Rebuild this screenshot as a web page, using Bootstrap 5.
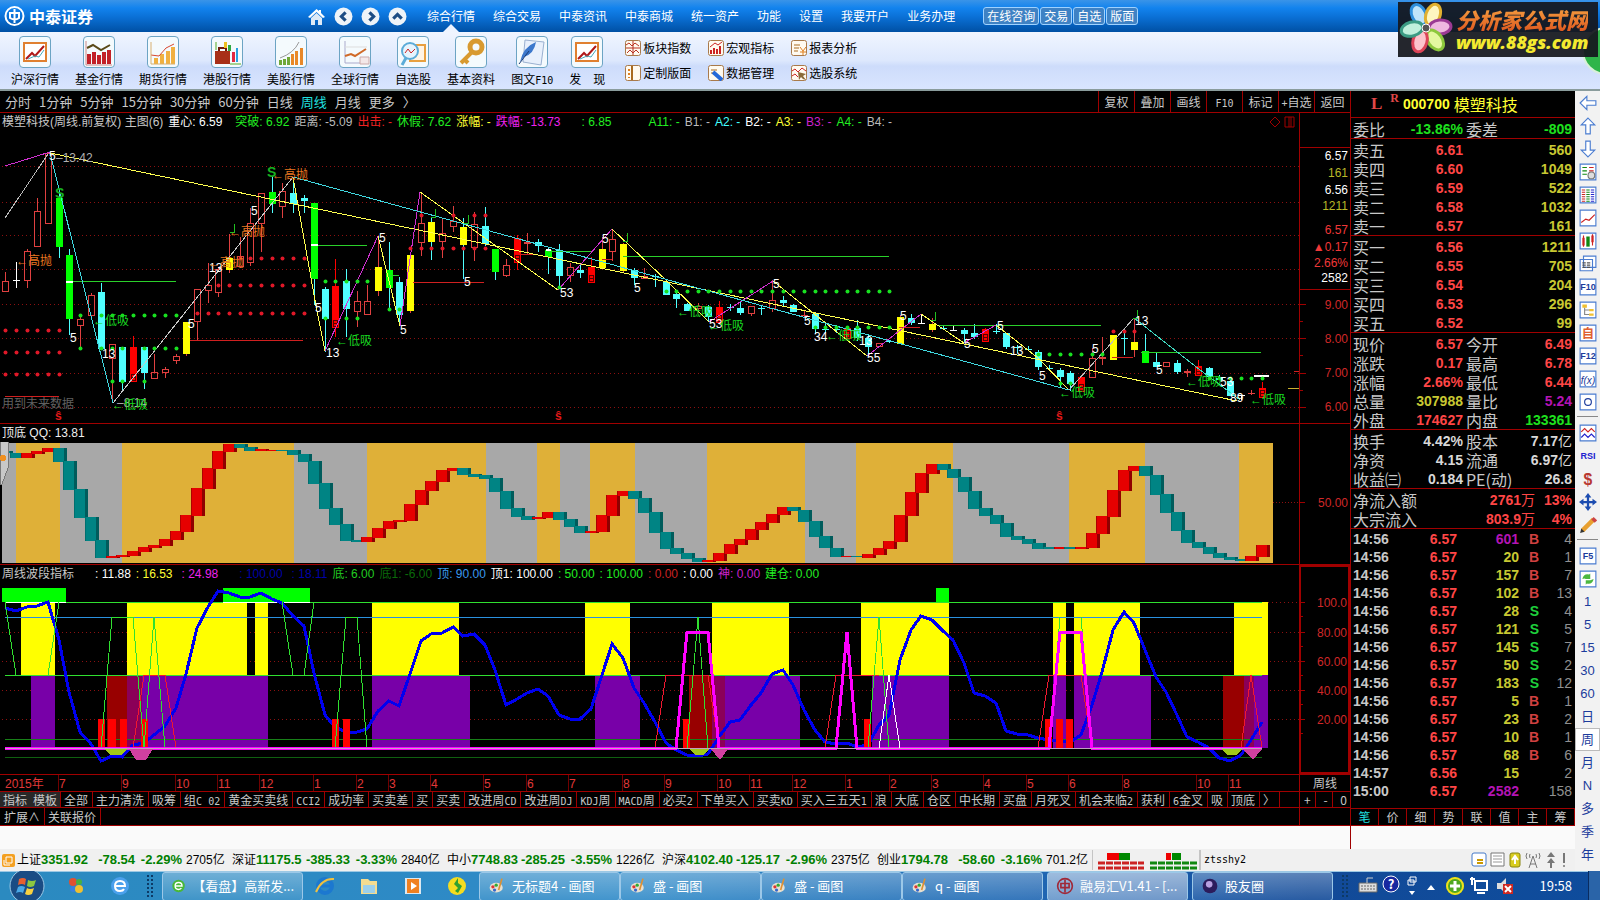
<!DOCTYPE html>
<html lang="zh-CN">
<head>
<meta charset="utf-8">
<meta name="viewport" content="width=device-width, initial-scale=1">
<title>中泰证券 融易汇</title>
<link href="https://cdn.jsdelivr.net/npm/bootstrap@5.3.0/dist/css/bootstrap.min.css" rel="stylesheet">
<style>
:root{--line:#a00000;--red:#ff3c3c;--soft:#e04848;--grey:#c8c8c8;--yel:#c8c832;--grn:#1ee01e;--mag:#b414b4;--cyan:#50ffff}
body{font-family:"Liberation Sans","Noto Sans CJK SC",sans-serif;font-size:12px;line-height:16px;background:#000;color:var(--grey);overflow-x:hidden}
button{font:inherit;color:inherit;background:none;border:0;padding:0;line-height:inherit}
a{color:inherit;text-decoration:none}
svg{display:block}
.cjk{font-family:"Noto Sans CJK SC",sans-serif}
.lat{font-family:"DejaVu Sans Mono",monospace;font-size:10px;line-height:1}
.topbar{height:32px;background:linear-gradient(#3a94e8,#1283ee 25%,#0a6fd4 55%,#0050a4);color:#fff}
.brandname{font:700 16px/20px "Noto Sans CJK SC",sans-serif}
.topnav{gap:18px}
.topnav a{position:relative}
.topnav a.current::after{content:"";position:absolute;left:16px;top:16px;border:8px solid transparent;border-top:0;border-bottom-color:#eef4ff}
.topbtns{gap:1px}
.topbtn{height:18px;padding:0 3px;border:1px solid #9fd2ff;border-radius:3px;background:#3f82c4}
.ribbon{height:59px;background:linear-gradient(#f0f5ff,#dde8fd 50%,#cddcfb 60%,#d9e5fe);border-bottom:2px solid #8a9c9c;color:#000}
.bigtool{padding:4px 8px 0}
.bigtool .pic{width:32px;height:32px;border:1px solid #6ca4c4;border-radius:4px;background:#f4fafd;margin-bottom:3px}
.minis{grid-template-columns:repeat(3,66px);column-gap:17px;row-gap:8px}
.minis button{gap:2px;height:17px;white-space:nowrap}
.sitelogo{position:absolute;right:2px;top:2px;width:200px;height:55px;background:#15181eee;z-index:3}
.sitelogo b{font:italic 900 22px/24px "Noto Sans CJK SC",sans-serif;background:linear-gradient(#f5a040,#e05a20);-webkit-background-clip:text;color:transparent}
.sitelogo i{font:italic 800 18px/22px "Open Sans",sans-serif;color:#f4ea30}
.ball{position:absolute;right:-30px;top:27px;width:48px;height:48px;border-radius:50%;background:#2fb54a;border:2px solid #d8f0d8;z-index:2}
.quote-shell{width:100%}
.periods{height:22px;border-bottom:1px solid var(--line)}
.periods .list{gap:8px;padding-left:5px;font-size:13px}
.periods .ops button{width:36px;border-left:1px solid var(--line);white-space:nowrap}
.pane{position:relative;border-bottom:1px solid var(--line)}
.axis{width:51px;border-left:1px solid var(--line)}
.legend-row{height:18px;gap:5px;padding-left:2px;white-space:nowrap}
.months{height:16px}
.tabs{height:17px;border-top:1px solid var(--line);border-bottom:1px solid var(--line)}
.tabs button{padding:0 4px;border-right:1px solid var(--line);margin-right:-1px;white-space:nowrap;line-height:15px}
.tabs .tool{padding:0 3px;background:#282828}
.tabs.links{border-top:0;height:18px}
.side{width:225px;border-left:1px solid var(--line)}
.side table{width:100%;border-collapse:separate;border-spacing:0;padding-top:1px;border-bottom:1px solid var(--line);font-weight:700;font-size:14px}
.side td,.side th{height:19px;padding:0;line-height:18px;text-align:right}
.side th{font:400 16px/18px "Noto Sans CJK SC",sans-serif;text-align:left;width:50px;white-space:nowrap}
.side td:last-child{padding-right:3px}
.side tr>:first-child{padding-left:2px}
.side td.w{width:60px}
.side th.n{padding-left:3px}
.head{height:27px;border-bottom:1px solid var(--line);color:#ffff32}
.ticks td{height:18px;line-height:17px}
.side .ticks{border:0}
.sidetabs{height:18px;border-top:1px solid var(--line);border-bottom:1px solid var(--line)}
.sidetabs button{flex:1;border-right:1px solid var(--line)}
.strip{width:25px;background:#f2f2f2;color:#1c3c9c}
.strip button{height:23px;display:flex;align-items:center;justify-content:center;width:100%;font-size:13px}
.strip hr{margin:3px 2px 4px;border-color:#888;opacity:1}
.strip .on{background:#fff;border:1px solid #bbb}
.status{height:22px;background:#f0f0f0;color:#000}
.gap-band{height:23px;background:#fafafa}
.idx{width:215px;white-space:nowrap}
.idx b{color:#008000;font-size:13px;text-align:right}
.idx .c{width:47px}.idx .p{width:47px}.idx .v{width:47px;text-align:left}
.taskbar{height:30px;background:linear-gradient(90deg,#2b8ac0,#2f8ac8 40%,#1c5fae 70%,#124a98 82%,#0e4c9c);box-shadow:inset 0 1px #9cc8e4;color:#fff;font-family:"Noto Sans CJK SC",sans-serif;font-size:13px}
.task{width:141px;height:29px;padding:0 8px;border:1px solid #9cc8e8;border-radius:3px;background:linear-gradient(#ffffff50,#ffffff18);gap:6px;text-align:left;white-space:nowrap}
.task.act{background:linear-gradient(#ffffff90,#ffffff60)}
.grip{width:8px;height:24px;background-image:radial-gradient(#0d3a66 1px,transparent 1px);background-size:4px 4px}
.quick{width:44px}
</style>
</head>
<body>
<header class="position-relative overflow-hidden">
  <div class="topbar d-flex align-items-center">
    <div class="d-flex align-items-center gap-1 ps-1" style="width:307px">
      <svg width="21" height="22" viewBox="0 0 21 22" fill="none" stroke="#fff" stroke-width="2"><circle cx="10.500" cy="11" r="9"/><path d="M10.500 4v14M6 8h9v5q-4 3-9 0z"/></svg>
      <span class="brandname">中泰证券</span>
    </div>
    <div class="d-flex gap-2 pe-3" id="navicons"></div>
    <nav class="topnav d-flex ms-1" id="topnav"></nav>
    <div class="topbtns d-flex ms-4 ps-1" id="topbtns"></div>
  </div>
  <div class="ribbon d-flex">
    <div class="d-flex" id="bigtools" style="padding-left:3px"></div>
    <div class="minis d-grid align-content-center ms-2 ps-1" id="minis"></div>
  </div>
  <div class="ball"></div>
  <div class="sitelogo d-flex align-items-center">
    <svg width="58" height="55" viewBox="0 0 58 55"><g stroke-width="3">
      <ellipse cx="21" cy="13" rx="7" ry="11" transform="rotate(-25 21 13)" fill="#bfe4fa" stroke="#2e8fdc"/>
      <ellipse cx="35" cy="13" rx="7" ry="11" transform="rotate(20 35 13)" fill="#fdf6c0" stroke="#e0b030"/>
      <ellipse cx="42" cy="25" rx="7" ry="11" transform="rotate(85 42 25)" fill="#f0b8e0" stroke="#9c3a94"/>
      <ellipse cx="37" cy="38" rx="7" ry="11" transform="rotate(-35 37 38)" fill="#e4f8a0" stroke="#8cc83c"/>
      <ellipse cx="22" cy="39" rx="7" ry="11" transform="rotate(15 22 39)" fill="#fcc4cc" stroke="#dc4458"/>
      <ellipse cx="14" cy="27" rx="7" ry="11" transform="rotate(75 14 27)" fill="#c0f0dc" stroke="#3c9c84"/></g>
      <circle cx="28" cy="26" r="4" fill="#555" stroke="#fff"/></svg>
    <div class="d-flex flex-column"><b>分析家公式网</b><i>www.88gs.com</i></div>
  </div>
</header>

<main class="d-flex quote-shell">
  <div class="flex-grow-1 d-flex flex-column" style="min-width:0">
  <div class="d-flex">
  <section class="flex-grow-1 d-flex flex-column" style="min-width:0">
    <div class="periods d-flex justify-content-between">
      <div class="list d-flex align-items-center cjk" id="periods"></div>
      <div class="ops d-flex cjk" id="ops"></div>
    </div>
    <div class="pane d-flex">
      <div class="flex-grow-1 overflow-hidden">
        <div class="legend-row d-flex align-items-center" id="leg1"></div>
        <svg id="kline" width="100%" height="292"></svg>
      </div>
      <div class="axis"><svg id="ax1" width="50" height="310"></svg></div>
    </div>
    <div class="pane d-flex">
      <div class="flex-grow-1 overflow-hidden">
        <div class="legend-row d-flex align-items-center" style="color:#eee">顶底 QQ: 13.81</div>
        <svg id="steps" width="100%" height="122"></svg>
      </div>
      <div class="axis"><svg id="ax2" width="50" height="140"></svg></div>
    </div>
    <div class="pane d-flex">
      <div class="flex-grow-1 overflow-hidden">
        <div class="legend-row d-flex align-items-center" id="leg3"></div>
        <svg id="wave" width="100%" height="191"></svg>
      </div>
      <div class="axis" style="border:2px solid var(--line)"><svg id="ax3" width="47" height="205"></svg></div>
    </div>
    <div class="d-flex">
      <svg class="months flex-grow-1" id="months" height="16"></svg>
      <div class="axis text-center cjk">周线</div>
    </div>
    <div class="d-flex">
      <div class="tabs d-flex flex-grow-1 cjk overflow-hidden" id="tabs"></div>
      <div class="tabs axis d-flex cjk justify-content-between"><button type="button">+</button><button type="button">-</button><button type="button" class="border-end-0">0</button></div>
    </div>
    <div class="d-flex">
      <div class="tabs links d-flex flex-grow-1 cjk"><button type="button">扩展∧</button><button type="button">关联报价</button></div>
      <div class="tabs links axis"></div>
    </div>
    <div class="gap-band"></div>
  </section>
  <aside class="side d-flex flex-column flex-shrink-0">
    <div class="head d-flex align-items-center">
      <span class="fw-bold" style="color:var(--soft);padding-left:20px;font:700 17px 'Liberation Serif',serif">L</span>
      <sup class="ms-2 me-1 fw-bold" style="color:var(--soft);font-family:'Liberation Serif',serif;font-size:12px">R</sup>
      <b class="me-1" style="font-size:14px">000700</b><span class="cjk" style="font-size:16px">模塑科技</span>
    </div>
    <div id="book"></div>
    <table class="ticks" id="ticks"></table>
    <div class="sidetabs d-flex cjk mt-auto" id="sidetabs"></div>
    <div class="gap-band"></div>
  </aside>
  </div>
  <div class="status d-flex align-items-center">
    <svg width="17" height="16" viewBox="0 0 17 16"><rect x="2" y="2" width="13" height="13" rx="2" fill="#f4a020"/><path d="M6 5h6v6H6zM4 8v5h6" fill="none" stroke="#fff"/></svg>
    <div class="d-flex" id="indices"></div>
    <svg width="112" height="20" viewBox="0 0 112 20"><path d="M0 0v20M108 0v20" stroke="#999"/><path d="M15 3h12v7H15zM74 3h5v7h-5z" fill="#e00"/><path d="M27 3h11v7H27zM80 3h9v7h-9z" fill="#080"/><path d="M6 13h46M6 18h46" stroke="#c22" stroke-width="3" stroke-dasharray="7 1"/><path d="M58 13h47M58 18h47" stroke="#181" stroke-width="3" stroke-dasharray="7 1"/></svg>
    <span class="lat">ztsshy2</span>
    <svg class="ms-auto" width="104" height="20" viewBox="0 0 104 20" fill="none"><rect x="1" y="3" width="14" height="13" rx="2" fill="#fff" stroke="#4478c8"/><path d="M6 10h6M6 13h6" stroke="#c90" stroke-width="2"/><path d="M20 3h13v13H20z" fill="#fff" stroke="#777"/><path d="M22 6h9M22 9h9M22 12h9" stroke="#999"/><rect x="39" y="3" width="10" height="14" rx="2" fill="#d8cc20" stroke="#888410"/><path d="M44 14V7M41 10l3-4 3 4" stroke="#fff" stroke-width="2"/><path d="M62 6l-4 12M62 6l4 12M59 14h6M56 3q-2 3 0 6M68 3q2 3 0 6M59 4q-1 2 0 4M65 4q1 2 0 4" stroke="#777"/><path d="M80 2l4 5h-8zM80 8l4 5h-8z" fill="#777"/><path d="M80 12v6M93 3v10" stroke="#777" stroke-width="2"/><circle cx="93" cy="16" r="1" fill="#777"/></svg>
  </div>
  </div>
  <aside class="strip flex-shrink-0" id="strip"></aside>
</main>

<footer>
  <div class="taskbar d-flex align-items-center" id="taskbar"></div>
</footer>

<script src="https://cdn.jsdelivr.net/npm/bootstrap@5.3.0/dist/js/bootstrap.bundle.min.js"></script>
<script>
const $ = id => document.getElementById(id);
const lat = s => s.replace(/[A-Za-z0-9_+]+/g, m => `<span class="lat">${m}</span>`);
const rect = (x,y,w,h,c) => `<rect x="${x}" y="${y}" width="${w}" height="${h}" fill="${c}"/>`;
const text = (x,y,t,c,extra='') => `<text x="${x}" y="${y}" fill="${c}" ${extra}>${t}</text>`;
const X = i => Math.round(5.3 + i*10.65);
const shift = (y,s) => `<g transform="translate(0,${-y})" shape-rendering="crispEdges">${s}</g>`;

/* ---------- header ---------- */
const chev = {l:'M11 5L7 9l4 4', r:'M8 5l4 4-4 4', u:'M5 11l4-4 4 4'};
$('navicons').innerHTML = '<button type="button" aria-label="主页"><svg width="19" height="19" viewBox="0 0 19 19"><path d="M9.500 2L1 10l2 1 6.500-6 6.500 6 2-1-4-4V3h-2v1z" fill="#fff"/><path d="M4 11l5.500-5 5.500 5v7h-4v-5H8v5H4z" fill="#dfeaf6"/></svg></button>' +
 ['l','r','u'].map(k=>`<button type="button" aria-label="${k}"><svg width="19" height="19" viewBox="0 0 18 18"><circle cx="9" cy="9" r="8.500" fill="#eef3f8"/><path d="${chev[k]}" fill="none" stroke="#1c4c84" stroke-width="3"/></svg></button>`).join('');
$('topnav').innerHTML = '综合行情,综合交易,中泰资讯,中泰商城,统一资产,功能,设置,我要开户,业务办理'.split(',').map((t,i)=>`<a href="#" class="cjk${i?'':' current'}">${t}</a>`).join('');
$('topbtns').innerHTML = '在线咨询,交易,自选,版面'.split(',').map(t=>`<button type="button" class="topbtn cjk">${t}</button>`).join('');

const art = {
 frame:'<path d="M4 6h22v18H4z" fill="#fff" stroke="#e08030" stroke-width="2"/><path d="M6 22l6-6 3 3 9-10" fill="none" stroke="#b01818" stroke-width="2"/><path d="M8 22l7-3 4 1 5-7" fill="none" stroke="#4ab"/>',
 bars:'<path d="M3 17h4v10H3zM8 15h4v12H8zM13 18h4v9h-4zM18 15h4v12h-4zM23 13h4v14h-4z" fill="#c22028"/><path d="M3 11l6-3 8 5 9-5" fill="none" stroke="#5a4a18" stroke-width="2"/><path d="M2 4v24h26" fill="none" stroke="#c88"/>',
 gold:'<path d="M6 21h4v6H6zM12 17h4v10h-4zM18 14h4v13h-4zM23 10h4v17h-4z" fill="#f0b040"/><path d="M3 18l8 1 7-8 8-4" fill="none" stroke="#d84830"/><path d="M3 5v22h24" fill="none" stroke="#d8b070"/>',
 bag:'<path d="M3 14h15v13H3z" fill="#a83018"/><path d="M7 14v-3h7v3" fill="none" stroke="#701c0c" stroke-width="2"/><path d="M12 5h3v6h-3z" fill="#eec020"/><path d="M16 8h3v6h-3z" fill="#30a840"/><path d="M20 15h3v10h-3z" fill="#e02840"/><path d="M25 11v14" stroke="#28a0e0" stroke-width="2"/><path d="M4 5v8M18 27h11" stroke="#5a2"/>',
 rise:'<path d="M3 23h3v5H3zM7 22h3v6H7zM11 20h3v8h-3z" fill="#70a838"/><path d="M15 17h3v11h-3zM19 14h3v14h-3zM24 11h3v17h-3z" fill="#e88828"/><path d="M4 21Q18 16 23 5" fill="none" stroke="#999"/>',
 globe:'<path d="M5 4v22h22" fill="none" stroke="#aac"/><path d="M5 10h22" stroke="#ddd"/><path d="M5 19l6-2 4 2 11-7" fill="none" stroke="#d06a28" stroke-width="2"/><path d="M20 20h9v7h-9z" fill="#f4e8e8" stroke="#caa"/>',
 lens:'<path d="M12 8h15v16H12z" fill="#fff4e4" stroke="#e8a040" stroke-width="2"/><circle cx="12" cy="14" r="8" fill="#e6f4fc" stroke="#5cacd8" stroke-width="2"/><path d="M7 16l3-4 3 4 4-4" fill="none" stroke="#c22"/><path d="M8 21l-4 7" stroke="#5cacd8" stroke-width="3"/>',
 key:'<circle cx="20" cy="10" r="6" fill="none" stroke="#d89a30" stroke-width="5"/><path d="M16 15L5 26M8 22l4 4" stroke="#d89a30" stroke-width="4"/>',
 pen:'<path d="M8 3l19 2-3 23-18-3z" fill="#e8f0fc" stroke="#9ab0d0"/><path d="M3 25Q6 10 19 5q-2 12-12 15z" fill="#3c78cc"/><path d="M2 27l10-13" stroke="#1c3c74"/>'
};
$('bigtools').innerHTML = [['沪深行情','frame'],['基金行情','bars'],['期货行情','gold'],['港股行情','bag'],['美股行情','rise'],['全球行情','globe'],['自选股','lens'],['基本资料','key'],['图文F10','pen'],['发　现','frame']]
 .map(([t,a])=>`<button type="button" class="bigtool d-flex flex-column align-items-center cjk"><svg class="pic" viewBox="0 0 30 30">${art[a]}</svg><span>${lat(t)}</span></button>`).join('');
const mini = {
 a:'<path d="M1 8h14M8 1v14M1 5l3-2 3 3 3-3 4 3M2 13l3-3 3 3 3-3 3 3" stroke="#b83020" fill="none"/>',
 b:'<path d="M3 14v-4M6 14V8M9 14V9M12 14V6" stroke="#c22" stroke-width="2"/><path d="M2 7l5-4 3 2 4-3" stroke="#c22" fill="none"/>',
 c:'<path d="M3 5h6M3 8h5M3 11h4" stroke="#a86a20"/><path d="M9 7l3 4 3-4M12 11v4M9 12h6" stroke="#e08020" fill="none"/>',
 d:'<path d="M7 1v14" stroke="#a86a20" stroke-width="2"/><path d="M4 4v9" stroke="#e08020" stroke-width="2" stroke-dasharray="2 2"/>',
 e:'<path d="M3 5h6M3 8h5" stroke="#a86a20"/><path d="M5 7l9 8" stroke="#2468d8" stroke-width="4"/>',
 f:'<path d="M1 6l3-2 3 3 4-4 4 3M1 11l3-2 3 3" stroke="#c22" fill="none"/><path d="M7 7l8 2-3 2 3 4-3-1-2-2-2 3z" fill="#8a6a38"/>'};
$('minis').innerHTML = [['板块指数','a'],['宏观指标','b'],['报表分析','c'],['定制版面','d'],['数据管理','e'],['选股系统','f']]
 .map(([t,a])=>`<button type="button" class="d-flex align-items-center cjk"><svg width="16" height="16" viewBox="0 0 16 16"><rect x=".5" y=".5" width="15" height="15" rx="2" fill="#fffaf0" stroke="#a87848"/>${mini[a]}</svg>${t}</button>`).join('');

/* ---------- period row and legends ---------- */
$('periods').innerHTML = '分时,1分钟,5分钟,15分钟,30分钟,60分钟,日线,周线,月线,更多,〉'.split(',').map(t=>`<button type="button"${t==='周线'?' style="color:#20e0e0"':''}>${t}</button>`).join('');
$('ops').innerHTML = '复权,叠加,画线,F10,标记,+自选,返回'.split(',').map(t=>`<button type="button">${lat(t)}</button>`).join('');
const legend = a => a.map(([t,c,m])=>`<span class="${m||''}" style="color:${c}">${t}</span>`).join('');
$('leg1').innerHTML = legend([['模塑科技(周线.前复权) 主图(6)','#c8c8c8'],['重心: 6.59','#fff'],['突破: 6.92','#2e2','ms-2'],['距离: -5.09','#bbb'],['出击: -','#e22'],['休假: 7.62','#2e2'],['涨幅: -','#ff3'],['跌幅: -13.73','#e2e'],[': 6.85','#2e2','ms-3'],['A11: -','#2e2','ms-4 ps-2'],['B1: -','#bbb'],['A2: -','#4ff'],['B2: -','#fff'],['A3: -','#ff3'],['B3: -','#c2c'],['A4: -','#2e2'],['B4: -','#bbb']])
 + '<svg class="ms-auto me-1" width="26" height="14" fill="none" stroke="#a00000"><path d="M6 2l5 5-5 5-5-5zM16 2h9v10h-9zM20 2v10M22 2v10"/></svg>';
$('leg3').innerHTML = legend([['周线波段指标','#c8c8c8'],[': 11.88','#fff','ms-3'],[': 16.53','#ff3'],[': 24.98','#e2e','ms-1'],[': 100.00','#0000a8','ms-3'],[': 18.11','#0000a8','ms-1'],['底: 6.00','#2c2'],['底1: -6.00','#0a6a0a'],['顶: 90.00','#3a9aee'],['顶1: 100.00','#fff'],[': 50.00','#2e2'],[': 100.00','#2e2'],[': 0.00','#c22'],[': 0.00','#fff'],['神: 0.00','#c2c'],['建仓: 0.00','#2e2']]);

/* ---------- candlesticks: type, high, open/close top, bottom, low ---------- */
const K = `h272,281,292,292 w262,280,281,288 h249,251,281,288 h198,211,247,247 h152,153,224,224 g190,198,247,258 g249,255,319,335 h315,319,326,347 h293,295,316,316 c283,292,349,349
h344,344,359,403 c347,347,382,392 r336,347,382,382 c347,347,373,389 h354,372,379,379 h367,369,373,378 h354,356,361,364 y322,322,354,356 h289,289,322,340 h263,285,291,303
h267,269,293,297 y234,258,270,273 h237,256,267,268 h208,223,263,266 h193,193,224,252 g176,192,204,213 h183,191,207,218 c177,193,204,213 c195,198,201,213 g203,203,279,305
c287,289,319,352 r259,286,328,337 c269,281,309,337 h291,301,312,327 h285,301,315,315 y238,267,291,296 g242,270,288,310 c277,282,315,325 y255,255,311,313 h192,223,243,256
y218,222,242,260 h218,233,242,258 h206,221,227,232 y218,227,245,279 h212,224,248,261 c207,226,244,246 g249,249,272,280 h259,265,276,277 r235,238,263,270 h233,242,244,254
c239,242,246,252 g248,250,257,274 c244,250,276,288 h263,267,276,282 c265,270,273,278 r257,267,283,283 y237,249,268,268 h229,239,252,261 y243,244,271,272 c268,270,278,285
h268,276,279,279 c274,276,277,287 c282,282,295,295 c292,294,299,308 c303,304,311,311 h303,306,309,313 c305,307,317,322 r301,307,323,323 c304,307,308,311 c302,308,313,315
h306,306,314,316 c305,308,309,315 h280,300,309,312 c296,300,303,306 c304,305,312,312 h310,315,316,317 c313,314,329,334 c323,329,330,333 c325,329,330,333 r327,328,339,339
c320,328,338,341 c335,338,347,356 h343,343,347,347 c340,341,342,343 y315,317,344,344 c314,318,323,325 w314,323,324,324 y318,324,330,332 c325,328,329,330 w326,330,331,331
c328,330,334,342 c324,333,337,339 r328,329,342,342 c324,331,332,334 c333,333,347,349 c345,347,348,353 c346,349,350,351 c350,352,367,370 c365,368,369,371 c368,370,377,388
c371,373,384,391 r376,377,392,392 h348,358,378,378 h337,357,359,365 y335,335,360,360 c328,338,339,355 y318,342,350,357 g334,351,363,363 c353,362,367,367 h362,362,367,367
c360,363,372,374 h369,371,373,377 r360,366,376,376 c367,368,377,377 c375,378,380,380 c379,381,396,396 w395,395,396,400 h390,393,394,395 r382,388,398,398`.split(/\s+/);
const col = {h:'#e04040',w:'#fff',g:'#00ff00',c:'#50ffff',r:'#ff0000',y:'#ffff00'};
let s = '';
[166,202,235,269,304,338,373,407].forEach(y => s += `<path d="M2 ${y}.500H4000" stroke="#8c1010" stroke-dasharray="1 3"/>`);
K.forEach((k,i)=>{
  const t=k[0],[h,a,b,l]=k.slice(1).split(',').map(Number),x=X(i),c=col[t],wick=t==='g'||t==='y'&&i===40||t==='y'&&i===43?'#50ffff':(t==='y'?'#e04040':c);
  s += rect(x,h,1,a-h,wick)+rect(x,b,1,l-b,wick);
  if(t==='h'&&b-a>2) s += `<rect x="${x-2.5}" y="${a+.5}" width="6" height="${b-a-1}" fill="none" stroke="${c}"/>`;
  else s += rect(x-3,a,7,Math.max(1,b-a),c);
  if(t==='r') s += `<path d="M${x-2.5} ${b-8.5}h6v8h-6zm2 2h2v1h-2zm0 3h2v1h-2z" fill="#500" stroke="#f00"/>`;
});
[['#2ad02a',[69,281,176],[314,245,367],[548,251,591],[623,256,889],[938,325,1101],[1141,352,1261],[389,275,399]],
 ['#d02020',[190,340,303],[5,396,59],[413,282,484],[520,254,535],[602,259,612],[899,327,920],[1112,357,1133],[1294,371,1306]],
 ['#c8b030',[1288,388,1299]]].forEach(([c,...a])=>a.forEach(([x,y,z])=>s+=rect(x,y,z-x,1,c)));
[[66,281,73],[311,244,318],[546,249,551],[1254,375,1269]].forEach(([x,y,z])=>s+=rect(x,y,z-x,2,'#fff'));
const poly = (c,p,w=1)=>`<polyline points="${p}" fill="none" stroke="${c}" stroke-width="${w}"/>`;
s += [['#ffff50','50,153 1237,401'],['#40d8e0','50,153 113,403'],['#d030d0','5,166 50,152'],['#bbb','5,218 48,154'],['#c8c8c8','113,403 293,177'],['#ffff50','293,177 316,306 325,351'],['#d030d0','325,351 378,236'],['#ffff50','378,236 400,326'],['#d030d0','400,326 420,192'],['#ffff50','420,192 513,258 558,290'],['#d030d0','558,290 612,229'],['#ffff50','612,229 668,282 709,322'],['#d030d0','709,322 773,281'],['#ffff50','773,281 867,356'],['#d030d0','867,356 921,314'],['#ffff50','921,314 964,343'],['#d030d0','964,343 996,325'],['#ffff50','996,325 1038,358 1069,390'],['#bbb','1069,390 1134,318'],['#40d8c0','1134,318 1195,366 1240,400'],['#40d8e0','293,177 1069,390']].map(a=>poly(...a)).join('');
[[234,224],[435,209],[468,215],[627,233],[935,312],[1137,310]].forEach(([x,y])=>s+=poly('#20c020',`${x},${y} ${x},${y+8} ${x-4},${y+8}`));
const dots=(c,y,a,b,skip=[])=>{for(let i=a;i<=b;i++) if(!skip.includes(i)) s+=`<circle cx="${X(i)}.5" cy="${y}.5" r="2" fill="${c}" shape-rendering="auto"/>`};
const R='#e01828',G='#18e020';
[[R,330,0,5],[R,352,0,5],[R,374,0,5],[G,315,7,16,[8]],[G,348,7,16,[8,12]],[G,381,10,13,[12]],[R,258,22,28],[R,285,20,28],[R,313,18,28],[G,281,30,34],[G,318,30,33,[31]],[R,248,38,45],[R,215,39,45,[40,41,43]],[G,309,36,37],[G,287,52,52],[G,291,62,83],[G,327,76,83],[G,354,97,103],[R,331,104,106],[G,378,113,118],[G,383,99,100]].forEach(a=>dots(...a));
[[49,160,'5'],[70,342,'5'],[102,358,'13'],[188,328,'5'],[209,272,'13'],[251,215,'5'],[315,312,'5'],[326,357,'13'],[379,242,'5'],[400,334,'5'],[464,286,'5'],[560,297,'53'],[602,243,'5'],[634,292,'5'],[709,328,'53'],[773,288,'5'],[804,325,'5'],[814,341,'34'],[859,345,'13'],[867,362,'55'],[900,320,'5'],[964,348,'5'],[997,330,'5'],[1010,355,'13'],[1039,380,'5'],[1092,353,'5'],[1135,325,'13'],[1156,374,'5'],[1220,386,'53'],[1230,402,'89']].forEach(([x,y,t])=>s+=text(x,y,t,'#fff'));
s += text(56,162,'–13.42','#b0b0b0')+text(117,407,'–8.14','#b0b0b0');
[[16,265],[208,267],[229,236],[272,179]].forEach(([x,y])=>s+=text(x,y,'←高抛','#e87820'));
[[93,325],[112,409],[336,345],[677,316],[708,330],[826,340],[1059,397],[1186,386],[1250,404]].forEach(([x,y])=>s+=text(x,y,'←低吸','#18d820'));
[[55,198],[267,177]].forEach(([x,y])=>s+=text(x,y,'S','#18b020','font-weight="700" font-size="14"'));
[55,555,1056].forEach(x=>s+=text(x,420,'ŝ','#e01818','font-weight="700" font-size="12"'));
s += text(2,408,'用到未来数据','#606060');
$('kline').innerHTML = shift(131,s);

/* ---------- main axis ---------- */
s = rect(0,147,50,1,'#a00000')+rect(0,289,50,1,'#a00000');
[['6.57',160,'#fff'],['161',177,'#b8b828'],['6.56',194,'#fff'],['1211',210,'#b8b828'],['6.57',234,'#f03838'],['▲0.17',251,'#f03838'],['2.66%',267,'#f03838'],['2582',282,'#fff'],['9.00',309,'#d02828'],['8.00',343,'#d02828'],['7.00',377,'#d02828'],['6.00',411,'#d02828']].forEach(([t,y,c])=>s+=text(48,y,t,c,'text-anchor="end"'));
[304,321,338,355,373,390,407].forEach((y,i)=>s+=rect(0,y,i%2?3:6,1,'#a00000'));
$('ax1').innerHTML = shift(113,s);
$('ax2').innerHTML = shift(424,rect(0,502,5,1,'#a00000')+text(48,507,'50.00','#d02828','text-anchor="end"'));
s='';
[['100.0',602],['80.00',632],['60.00',661],['40.00',690],['20.00',719]].forEach(([t,y])=>s+=rect(0,y,4,1,'#a00000')+rect(0,y+14,2,1,'#a00000')+text(46,y+5,t,'#d02828','text-anchor="end"'));
$('ax3').innerHTML = shift(567,s);

/* ---------- stepped trend bars ---------- */
const B = `t451,453 t453,458 r453,458 r451,454 r448,452 t448,462 t461,490 t489,518 t517,541 t540,558 r556,558 r555,557 r551,556 r547,552 r545,548 r539,546 r531,540 r515,532 r488,516 r468,489 r451,469 r444,452 t444,448 t447,451 r449,451 r450,451 t450,451 t450,455 t454,462 t461,484
t483,509 t508,525 t524,541 t540,542 r537,542 r528,538 r521,529 r520,522 r504,521 r490,505 r481,491 r470,482 r468,471 t468,475 t474,477 t475,479 t478,492 t491,509 t508,517 t516,520 r517,519 r512,518 t512,520 t519,527 t526,533 r531,533 r515,532 r495,516 r491,496 t491,499
t498,513 t512,533 t532,549 t548,554 t553,559 t558,562 r560,562 r553,561 r544,554 r539,545 r529,540 r522,530 r514,523 r507,515 t507,511 t510,522 t521,537 t536,548 t548,557 r556,557 t556,557 r554,558 r548,555 r541,549 r515,542 r492,516 r473,493 r464,474 t464,470 t469,478
t477,492 t491,509 t508,516 t515,524 t523,537 t536,540 t539,544 t543,549 t547,549 r547,549 t547,549 r547,549 r533,548 r516,534 r490,517 r470,491 r466,471 t466,476 t475,495 t494,513 t512,531 t530,543 t542,548 t547,554 t553,558 t557,560 t559,561 r556,561 r545,557`.split(/\s+/);
s = rect(2,443,1271,120,'#a8a8a8');
[[16,60],[122,294],[367,486],[537,560],[590,635],[707,805],[856,953],[1069,1145],[1239,1273]].forEach(([a,b])=>s+=rect(a,443,b-a,120,'#dfb038'));
B.forEach((k,i)=>{const [a,b]=k.slice(1).split(',').map(Number),x=X(i)-6,r=k[0]==='r';
  s+=rect(x,a,14,b-a,r?'#e60000':'#008484')+rect(x+11,a,3,b-a,r?'#900000':'#005c5c')+rect(x,a,1,b-a,r?'#b00000':'#007070')});
s += '<path d="M1273 502.500H1299" stroke="#8c1010" stroke-dasharray="1 2"/><path d="M0 428l8 14v26l-6 16H0z" fill="#c8c8c8" stroke="#777"/><circle cx="3" cy="458" r="3" fill="#f09020"/>';
$('steps').innerHTML = shift(442,s);

/* ---------- wave indicator ---------- */
s='';
[632,661,690,719].forEach(y=>s+=`<path d="M2 ${y}.500H4000" stroke="#8c1010" stroke-dasharray="1 3"/>`);
s+='<path d="M1268 602.500H1299" stroke="#8c1010" stroke-dasharray="1 3"/>';
const blocks=(y,h,c,a)=>a.forEach(([p,q])=>s+=rect(p,y,q-p,h,c));
blocks(588,14,'#00ff00',[[2,66],[223,310],[936,949]]);
blocks(602,73,'#ffff00',[[21,55],[127,247],[255,268],[372,459],[585,630],[712,789],[861,949],[1053,1066],[1074,1140],[1234,1268]]);
blocks(675,73,'#7800a8',[[31,55],[142,268],[372,470],[595,640],[725,800],[872,949],[1053,1066],[1074,1151],[1254,1268]]);
blocks(675,73,'#8b0058',[[127,142],[712,725],[1244,1254]]);
blocks(675,73,'#980000',[[107,127],[689,712],[1223,1244]]);
const W=[608,611,607,606,602,640,692,732,744,761,756,757,745,743,735,726,708,674,628,607,591,593,597,597,593,599,603,616,626,673,715,727,732,732,729,711,701,706,674,641,634,633,627,636,634,645,670,705,699,693,689,696,715,719,719,709,675,644,658,688,703,722,743,750,755,756,754,737,722,720,705,693,674,670,685,710,730,742,744,743,747,745,725,715,660,630,616,620,631,640,663,693,696,703,731,734,735,738,740,741,742,735,705,672,630,612,623,650,677,692,715,737,742,748,758,761,755,740,722];
s += rect(5,602,1257,1,'#30e030')+rect(5,617,1257,1,'#2a90e0')+rect(5,675,1257,1,'#30e030')+rect(5,739,1257,1,'#188018')+rect(5,757,1257,1,'#106010');
s += rect(5,602,61,1,'#fff')+rect(223,602,87,1,'#fff');
s += poly('#0000f0',W.map((y,i)=>X(i)+','+y).join(' '),3);
blocks(719,30,'#ff0000',[[98,105],[108,116],[120,127],[141,148],[332,339],[343,350],[683,690],[864,871],[1045,1052],[1056,1063],[1066,1073]]);
const path=(c,w,...ps)=>ps.forEach(p=>s+=poly(c,p.map(([i,y])=>X(i)+','+y).join(' '),w));
path('#f01830',1,[[12,748],[13,675],[15,675],[16,748]],[[61,748],[62,675],[66,675],[67,748]],[[77,748],[78,675],[82,675]],[[97,748],[98,675],[101,675],[102,748]],[[116,748],[117,675],[118,748]]);
path('#30e030',1,[[0,602],[1,675]],[[4,675],[5,602]],[[9,748],[10,617],[12,617],[13,748],[14,617],[15,748]],[[26,602],[27,675]],[[28,675],[29,602]],[[31,748],[32,617],[33,617],[34,748]],[[64,748],[65,617],[66,748]],[[81,748],[82,617],[83,748]],[[98,748],[99,617]],[[101,617],[102,748]]);
path('#ff00ff',3,[[0,748],[63,748],[64,632],[66,632],[67,748],[78,748],[79,632],[80,748],[98,748],[99,632],[101,632],[102,748],[118,748]]);
path('#fff',1,[[82,748],[83,675],[84,748]]);
s += rect(5,748,1257,1,'#c0a0c0');
[[104,127],[689,709],[1221,1242]].forEach(([a,b])=>s+=`<path d="M${a} 749H${b}l-6 6H${a+6}z" fill="#a0c818"/>`);
s += '<path d="M129 749h24l-7 11h-10zM711 749h17l-8 11zM1243 749h19l-9 11z" fill="#d040a0"/>';
$('wave').innerHTML = shift(583,s);

/* ---------- month scale ---------- */
s = text(5,787,'2015年','#e03838');
[[59,7],[122,9],[176,10],[218,11],[260,12],[314,1],[357,2],[389,3],[431,4],[484,5],[527,6],[569,7],[623,8],[665,9],[718,10],[750,11],[793,12],[846,1],[890,2],[932,3],[984,4],[1027,5],[1069,6],[1123,8],[1197,10],[1229,11]].forEach(([x,t])=>s+=rect(x-1,774,1,16,'#700000')+text(x,787,t,'#e03838'));
$('months').innerHTML = shift(774,s);

$('tabs').innerHTML = '指标,模板,全部,主力清洗,吸筹,组C_02,黄金买卖线,CCI2,成功率,买卖差,买,买卖,改进周CD,改进周DJ,KDJ周,MACD周,必买2,下单买入,买卖KD,买入三五天1,浪,大底,仓区,中长期,买盘,月死叉,机会来临2,获利,6金叉,吸,顶底,〉'.split(',').map((t,i)=>`<button type="button"${i<2?' class="tool"':''}>${lat(t)}</button>`).join('');

/* ---------- quote tables ---------- */
const cl={r:'#ff4646',g:'#1ee01e',y:'#c8c832',m:'#b414b4',w:'#d8d8d8'};
const cell=v=>`<td class="w" style="color:${cl[v[0]]}">${v.slice(1)}</td>`;
const rows=a=>'<table>'+a.map(r=>`<tr><th>${r[0]}</th>${cell(r[1])}${r.length>3?`<th class="n">${r[2]}</th>`:'<th></th>'}${cell(r[r.length-1])}</tr>`).join('')+'</table>';
$('book').innerHTML = rows([['委比','g-13.86%','委差','g-809']])
 + rows([['卖五','r6.61','y560'],['卖四','r6.60','y1049'],['卖三','r6.59','y522'],['卖二','r6.58','y1032'],['卖一','r6.57','y161']])
 + rows([['买一','r6.56','y1211'],['买二','r6.55','y705'],['买三','r6.54','y204'],['买四','r6.53','y296'],['买五','r6.52','y99']])
 + rows([['现价','r6.57','今开','r6.49'],['涨跌','r0.17','最高','r6.78'],['涨幅','r2.66%','最低','r6.44'],['总量','y307988','量比','m5.24'],['外盘','r174627','内盘','g133361']])
 + rows([['换手','w4.42%','股本','w7.17<span class="fw-normal">亿</span>'],['净资','w4.15','流通','w6.97<span class="fw-normal">亿</span>'],['收益㈢','w0.184','PE(动)','w26.8']])
 + '<table><tr><th>净流入额</th><td style="color:#ff4646">2761<span class="fw-normal">万</span></td><td style="color:#ff4646;width:40px">13%</td></tr><tr><th>大宗流入</th><td style="color:#ff4646">803.9<span class="fw-normal">万</span></td><td style="color:#ff4646">4%</td></tr></table>';
$('ticks').innerHTML = '6.57 m601 B 4,6.57 y20 B 1,6.57 y157 B 7,6.57 y102 B 13,6.57 y28 S 4,6.57 y121 S 5,6.57 y145 S 7,6.57 y50 S 2,6.57 y183 S 12,6.57 y5 B 1,6.57 y23 B 2,6.57 y10 B 1,6.57 y68 B 6,6.56 y15 - 2,6.57 m2582 - 158'.split(',').map((r,i)=>{
  const [p,v,b,n]=r.split(' ');
  return `<tr><td class="text-start">${i<13?'14:56':i<14?'14:57':'15:00'}</td><td style="color:#ff4646;width:60px">${p}</td><td style="color:${cl[v[0]]};width:62px">${v.slice(1)}</td><td style="color:${b==='B'?'#d04040':'#1ed03c'};width:20px">${b==='-'?'':b}</td><td class="fw-normal" style="color:#909090;width:36px">${n}</td></tr>`}).join('');
$('sidetabs').innerHTML = [...'笔价细势联值主筹'].map((t,i)=>`<button type="button"${i?'':' style="color:#20e0e0"'}>${t}</button>`).join('');

/* ---------- tool strip ---------- */
const box=c=>`<path d="M1 1h14v14H1z" fill="#fff" stroke="#4a7cd0"/>${c}`, tx=t=>box(`<text x="8" y="11" text-anchor="middle" font-size="8" font-weight="700" fill="#1c3c9c">${t}</text>`);
const S=['<path d="M1 8l6-6v4h8v4H7v4z" fill="#fff" stroke="#4a7cd0"/>','<path d="M8 1l6 6h-4v8H6V7H2z" fill="#fff" stroke="#4a7cd0"/>','<path d="M8 15l6-6h-4V1H6v8H2z" fill="#fff" stroke="#4a7cd0"/>',
 box('<path d="M3 4h4M3 7h4M3 10h4" stroke="#181"/><path d="M9 4h4M9 7h4" stroke="#c22"/><circle cx="11" cy="11" r="3" fill="#ddd" stroke="#777"/>'),
 box('<path d="M4 3v11" stroke="#c22" stroke-width="3" stroke-dasharray="1 1"/><path d="M8 3v11" stroke="#181" stroke-width="3" stroke-dasharray="1 1"/><path d="M12 3v11" stroke="#22c" stroke-width="3" stroke-dasharray="1 1"/>'),
 box('<path d="M2 12l4-3 3 1 5-5" stroke="#c22" fill="none"/>'),
 box('<path d="M4 5v7M12 3v6" stroke="#c22" stroke-width="2"/><path d="M8 4v9" stroke="#181" stroke-width="3"/><path d="M4 3v10M12 2v10" stroke="#c22"/>'),
 '<path d="M4 1h11v10H4zM1 4h11v10H1z" fill="#fff" stroke="#4a7cd0"/><path d="M3 7h7M3 9h7M3 11h7" stroke="#555" stroke-dasharray="3 1"/>',
 tx('F10'),box('<path d="M3 3h4v3H3zM9 7h4v2H9zM9 11h4v2H9z" fill="#f0c030"/><path d="M5 6v6h4M5 8h4" stroke="#888" fill="none"/>'),
 box('<text x="8" y="12" text-anchor="middle" font-size="11" font-weight="700" fill="#e06030">自</text>'),tx('F12'),
 box('<text x="8" y="12" text-anchor="middle" font-size="9" font-style="italic" fill="#1c3c9c">f(x)</text>'),box('<circle cx="8" cy="8" r="3" fill="none" stroke="#1c3c9c"/>'),'-',
 box('<path d="M2 7l3-3 3 3 3-3 3 3" stroke="#c22" fill="none"/><path d="M2 12l3-3 3 3 3-3 3 3" stroke="#22c" fill="none"/>'),
 '<text x="8" y="11" text-anchor="middle" font-size="8" font-weight="700" fill="#2020d0">RSI</text>',
 '<text x="8" y="13" text-anchor="middle" font-size="14" font-weight="700" fill="#b83830">$</text>',
 '<path d="M8 0l3 4H5zM8 16l3-4H5zM0 8l4-3v6zM16 8l-4-3v6z" fill="#1c4cb0"/><path d="M8 3v10M3 8h10" stroke="#1c4cb0" stroke-width="2"/>',
 '<path d="M3 13L13 3" stroke="#e8a030" stroke-width="4"/><path d="M1 15l1-4 3 3z" fill="#333"/><path d="M12 2l3 3" stroke="#c44" stroke-width="3"/>','-',
 tx('F5'),box('<path d="M3 8q1-5 6-4l1-1v5H6q-1-1-3 0M13 8q-1 5-6 4l-1 1V9h4q1 0 3-1" fill="#4cb840"/>')];
$('strip').innerHTML = S.map(v=>v==='-'?'<hr>':`<button type="button" aria-label="工具"><svg width="18" height="18" viewBox="0 0 16 16">${v}</svg></button>`).join('')
 + '1,5,15,30,60,日,周,月,N,多,季,年'.split(',').map(t=>`<button type="button"${t==='周'?' class="on"':''}>${t}</button>`).join('');

/* ---------- index bar ---------- */
$('indices').innerHTML = '上证 3351.92 -78.54 -2.29% 2705亿,深证 11175.5 -385.33 -3.33% 2840亿,中小 7748.83 -285.25 -3.55% 1226亿,沪深 4102.40 -125.17 -2.96% 2375亿,创业 1794.78 -58.60 -3.16% 701.2亿'.split(',').map(g=>{
 const [n,v,c,p,a]=g.split(' ');return `<div class="idx d-flex align-items-center"><span>${n}</span><b class="v">${v}</b><b class="c">${c}</b><b class="p">${p}</b><span class="ps-1">${a}</span></div>`}).join('');

/* ---------- taskbar ---------- */
const ic=(c,w=22)=>`<svg width="${w}" height="22" viewBox="0 0 22 22">${c}</svg>`;
const e=(c)=>`<circle cx="11" cy="11" r="9" fill="${c}"/><path d="M6 11h10q0-5-5-5t-5 5 5 5q3 0 4-2" fill="none" stroke="#fff" stroke-width="2"/>`;
const paint='<ellipse cx="10" cy="13" rx="8" ry="6" fill="#e8e0d0"/><circle cx="6" cy="12" r="2" fill="#d33"/><circle cx="10" cy="10" r="2" fill="#3a3"/><circle cx="8" cy="16" r="2" fill="#36c"/><path d="M13 16l4-14" stroke="#e09030" stroke-width="2"/>';
const q=c=>`<button type="button" class="quick d-flex justify-content-center" aria-label="快捷方式">${ic(c)}</button>`;
const task=(i,t,c='')=>`<button type="button" class="task d-flex align-items-center ${c}">${ic(i,18)}<span>${t}</span></button>`;
$('taskbar').innerHTML = `<button type="button" class="d-flex justify-content-center" style="width:54px" aria-label="开始"><svg width="38" height="30" viewBox="0 0 38 30"><circle cx="19" cy="15" r="17" fill="#1a4c84" stroke="#9cc8e4"/><path d="M11 8q4-2 7 0l-1 6q-3-2-7 0z" fill="#e86030"/><path d="M20 9q4 2 8 0l-2 6q-4 2-7 0z" fill="#8cc840"/><path d="M10 16q3-2 7 0l-2 6q-3-2-7 0z" fill="#48a8e8"/><path d="M19 17q3 2 7 0l-2 6q-4 2-7 0z" fill="#f8d040"/></svg></button>`
 + q('<circle cx="8" cy="7" r="4" fill="#e05030"/><circle cx="14" cy="7" r="3" fill="#48b040"/><circle cx="8" cy="14" r="3" fill="#3880e0"/><circle cx="14" cy="14" r="4" fill="#f0c030"/>')+q(e('#4aa0ec'))
 + '<span class="grip me-2 ms-1"></span>'+task(e('#48b838'),'【看盘】高新发...')
 + q('<circle cx="11" cy="11" r="7" fill="none" stroke="#1c78d0" stroke-width="4"/><path d="M5 11h12" stroke="#1c78d0" stroke-width="3"/><path d="M2 17Q8 3 20 4" fill="none" stroke="#f0c040" stroke-width="2"/>')+q('<path d="M3 4h7l2 2h7v13H3z" fill="#f4dc90"/><path d="M5 10h12v8H5z" fill="#9cd0ec"/>')+q('<path d="M3 3h16v16H3z" fill="#dce8f0"/><path d="M5 4h12v14H5z" fill="#f08020"/><path d="M9 7l6 4-6 4z" fill="#fff"/>')+q('<circle cx="11" cy="11" r="9" fill="#f4dc20"/><path d="M12 3v5l4 3-4 7-3-2 3-3-4-4z" fill="#30a030"/>')
 + task(paint,'无标题4 - 画图')+task(paint,'盛 - 画图')+task(paint,'盛 - 画图')+task(paint,'q - 画图')
 + '<span class="ps-1"></span>'+task('<circle cx="11" cy="11" r="9" fill="none" stroke="#a02838" stroke-width="2"/><path d="M11 3v16M6 8h10v5H6z" fill="none" stroke="#a02838" stroke-width="2"/>','融易汇V1.41 - [...','act')
 + '<span class="ps-1"></span>'+task('<circle cx="11" cy="11" r="9" fill="#2c1c5c"/><circle cx="10" cy="9" r="4" fill="#b8a0e0"/>','股友圈')
 + `<span class="grip ms-2 me-2"></span><svg width="170" height="24" viewBox="0 0 170 24"><path d="M2 9h18v9H2z" fill="#ddd" stroke="#666"/><path d="M4 12h14M4 15h14" stroke="#666" stroke-dasharray="2 1"/><path d="M10 9V4h6" stroke="#ccc" fill="none"/><circle cx="34" cy="10" r="8" fill="#1828a0" stroke="#fff"/><text x="34" y="15" font-size="13" font-weight="700" fill="#fff" text-anchor="middle">?</text><path d="M53 3h6v5h-6zM51 6h6v5h-6z" fill="none" stroke="#fff"/><path d="M52 17h6l-3 4zM70 16h8l-4-5z" fill="#fff"/><circle cx="98" cy="12" r="9" fill="#50a820"/><circle cx="98" cy="12" r="8" fill="none" stroke="#f0e020" stroke-width="2"/><path d="M98 7v10M93 12h10" stroke="#fff" stroke-width="3"/><path d="M118 7h12v9h-12zM120 19h8M115 3v8M113 5h5" fill="none" stroke="#fff" stroke-width="2"/><path d="M140 9h4l5-5v16l-5-5h-4z" fill="#ddd"/><path d="M146 10h10v10h-10z" fill="#d02820"/><path d="M148 12l6 6M154 12l-6 6" stroke="#fff" stroke-width="2"/></svg><span class="ms-auto me-3">19:58</span><span style="width:12px;height:30px;background:#2a64a8;border-left:1px solid #0a2c60"></span>`;
</script>
</body>
</html>
